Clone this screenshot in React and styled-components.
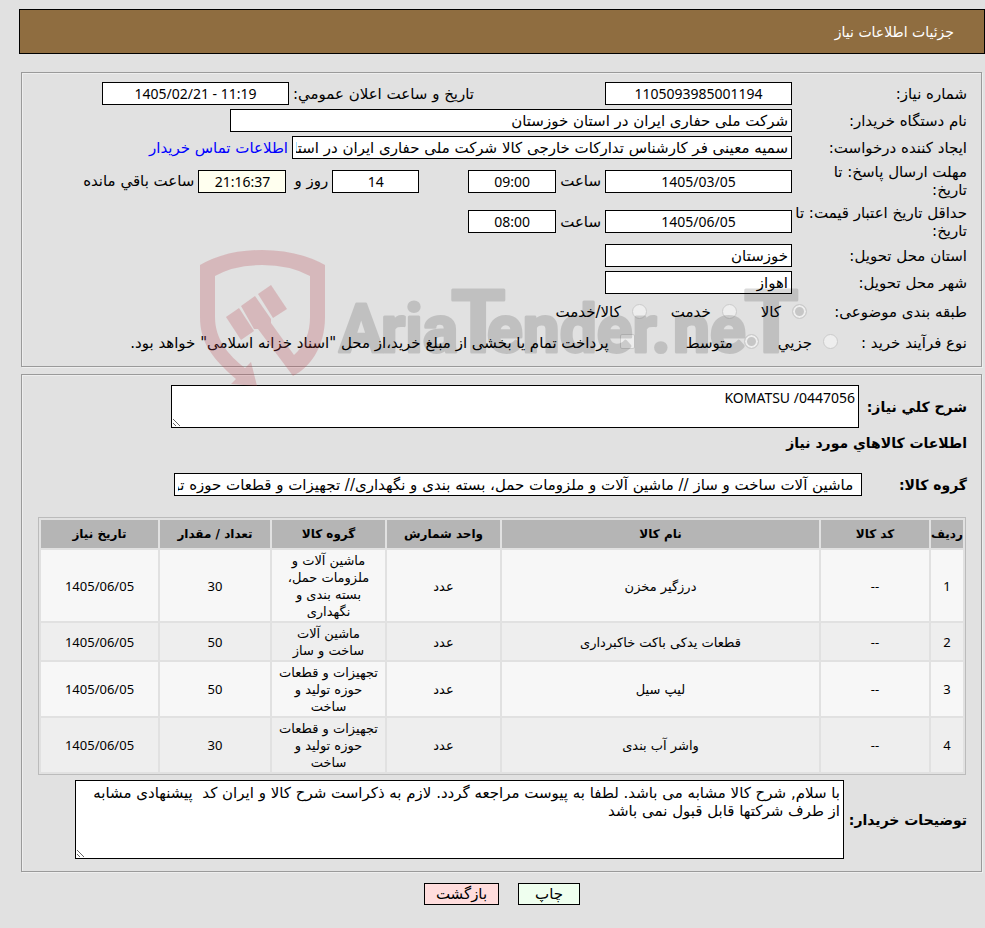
import React from 'react';
import styled, { createGlobalStyle } from 'styled-components';

const LATIN = '"Noto Sans", "DejaVu Sans", sans-serif';

const GlobalStyle = createGlobalStyle`
    * {
        box-sizing: border-box;
    }
    body {
        margin: 0;
        background-color: #e1e1e1;
        color: #000;
        font-family: "DejaVu Sans", sans-serif;
        font-size: 15px;
        line-height: 18px;
    }
    input, textarea, button {
        font: inherit;
        color: inherit;
    }
`

const Page = styled.main`
    position: relative;
    padding: 9px 0 22px 19px;
`

const Header = styled.h1`
    margin: 0 0 18px;
    padding: 13px 30px 12px;
    border: 1px solid #000;
    background-color: #8f6d40;
    color: #fff;
    font-size: 14px;
    font-weight: normal;
`

const Panel = styled.section`
    margin: 0 3px 7px 2px;
    padding: ${({ $pad }) => $pad};
    border: 1px solid #9a9a9a;
    box-shadow: inset 1px 1px #eee, 1px 1px #eee;
`

const Row = styled.div`
    display: flex;
    align-items: center;
    gap: 4px;
    min-height: ${({ $height }) => $height || 27}px;
`

const Label = styled.label`
    flex: none;
    width: ${({ $width }) => $width || 171}px;
    white-space: nowrap;
`

const Group = styled.span`
    flex: none;
    display: flex;
    align-items: center;
    gap: 4px;
    margin-left: ${({ $after }) => $after || 0}px;
`

const Field = styled.input`
    width: ${({ $width }) => $width || 187}px;
    min-width: 0;
    height: 23px;
    padding: 0 3px;
    border: 1px solid #000;
    border-radius: 0;
    background-color: ${({ $tint }) => $tint || '#fff'};
    text-align: right;
`

const NumberField = styled(Field)`
    font-family: ${LATIN};
    font-size: 14px;
    text-align: center;
`

const ContactLink = styled.a`
    color: #00f;
    text-decoration: none;
    white-space: nowrap;
`

const Option = styled.label`
    display: flex;
    align-items: center;
    gap: 11px;
    margin-left: ${({ $after }) => $after || 0}px;
    white-space: nowrap;
    input {
        appearance: none;
        flex: none;
        width: 15px;
        height: 15px;
        margin: 0 0 2px;
        border: 1px solid #cbcbcb;
        border-radius: 50%;
        background-color: #eee;
    }
    input[type="checkbox"] {
        border-radius: 2px;
    }
    input:checked {
        background-color: #c6c6c6;
        box-shadow: inset 0 0 0 2px #eee;
    }
`

const BoldLabel = styled.label`
    flex: none;
    width: ${({ $width }) => $width}px;
    font-size: 14px;
    font-weight: bold;
    white-space: nowrap;
`

const Title = styled.h2`
    margin: 5px 0 18px;
    font-size: 14px;
    line-height: 20px;
`

const Area = styled.textarea`
    flex: 0 1 ${({ $width }) => $width}px;
    height: ${({ $height }) => $height}px;
    padding: 3px;
    border: 1px solid #000;
    border-radius: 0;
    background-color: #fff;
`

const LatinArea = styled(Area)`
    font-family: ${LATIN};
    font-size: 14px;
`

const Table = styled.table`
    width: calc(100% - 3px);
    margin: 19px 1px 5px 2px;
    border: 1px solid #bbb;
    border-spacing: 2px;
    table-layout: fixed;
    text-align: center;
    font-size: 13px;
    line-height: 17px;
    th {
        height: 28px;
        padding: 0;
        background-color: #b5b5b5;
        font-size: 12px;
        white-space: nowrap;
    }
    td {
        padding: 2px 6px 1px;
        background-color: #f7f7f7;
    }
    tr:nth-child(even) td {
        background-color: #eee;
    }
`

const Col = styled.col`
    width: ${({ $width }) => $width || 'auto'};
`

const NumberCell = styled.td`
    font-family: ${LATIN};
`

const Actions = styled.div`
    display: flex;
    justify-content: center;
    gap: 19px;
    margin-top: 11px;
`

const Button = styled.button`
    width: ${({ $width }) => $width}px;
    height: 22px;
    padding: 0;
    border: 1px solid #000;
    background-color: ${({ $tint }) => $tint};
    cursor: pointer;
`

const Watermark = styled.div`
    position: absolute;
    left: 199px;
    top: 249px;
    pointer-events: none;
    svg {
        display: block;
    }
`

const ITEMS = [
    { name: 'درزگیر مخزن', group: 'ماشین آلات و ملزومات حمل، بسته بندی و نگهداری', count: 30 },
    { name: 'قطعات یدکی باکت خاکبرداری', group: 'ماشین آلات ساخت و ساز', count: 50 },
    { name: 'لیپ سیل', group: 'تجهیزات و قطعات حوزه تولید و ساخت', count: 50 },
    { name: 'واشر آب بندی', group: 'تجهیزات و قطعات حوزه تولید و ساخت', count: 30 },
]

const NOTE = 'با سلام, شرح کالا مشابه می باشد. لطفا به پیوست مراجعه گردد. لازم به ذکراست شرح کالا و ایران کد  پیشنهادی مشابه از طرف شرکتها قابل قبول نمی باشد';

const Logo = () => (
    <Watermark dir="ltr" aria-hidden="true">
        <svg width="604" height="140" viewBox="0 0 604 140">
            <g fill="#b8404a" fillOpacity="0.25">
                <path d="M1 16 Q27 1 63 1 Q99 1 126 16 V68 C126 99 110 119 94 127 L59 80 L55 80 L42 57 L56 47 L72 70 L72 74 L95 106 C106 96 111 84 111 68 V27 Q91 16 63 16 Q35 16 16 27 V68 C16 90 29 106 46 119 L52 113 L58 137 L32 135 L37 130 C14 110 1 94 1 68 Z" />
                <path d="M27 68 L40 59 L55 82 L42 91 Z" />
                <path d="M59 45 L72 36 L88 60 L74 69 Z" />
            </g>
            <text
                y="103"
                opacity="0.14"
                stroke="#000"
                strokeWidth="3"
                strokeLinejoin="round"
                fontFamily="Roboto, sans-serif"
                fontWeight="bold"
                fontSize="66"
            >
                <tspan x="140">A</tspan>
                <tspan x="182">ria</tspan>
                <tspan x="252" fontSize="88">T</tspan>
                <tspan x="288">ender.</tspan>
                <tspan x="474">ne</tspan>
                <tspan x="545" fontSize="88">T</tspan>
            </text>
        </svg>
    </Watermark>
)

const App = () => (
    <Page dir="rtl" lang="fa">
        <GlobalStyle />
        <Header>جزئیات اطلاعات نیاز</Header>

        <Panel $pad="7px 14px 9px">
            <Row>
                <Label htmlFor="number">شماره نیاز:</Label>
                <Group $after={127}>
                    <NumberField id="number" readOnly value="1105093985001194" />
                </Group>
                <label htmlFor="announced">تاریخ و ساعت اعلان عمومي:</label>
                <NumberField id="announced" dir="ltr" readOnly value="1405/02/21 - 11:19" />
            </Row>
            <Row>
                <Label htmlFor="buyer">نام دستگاه خریدار:</Label>
                <Field id="buyer" $width={562} readOnly value="شرکت ملی حفاری ایران در استان خوزستان" />
            </Row>
            <Row>
                <Label htmlFor="creator">ایجاد کننده درخواست:</Label>
                <Field
                    id="creator"
                    $width={500}
                    readOnly
                    value="سمیه معینی فر کارشناس تدارکات خارجی کالا شرکت ملی حفاری ایران در استان خوزستان"
                />
                <ContactLink href="#contact">اطلاعات تماس خریدار</ContactLink>
            </Row>
            <Row $height={40}>
                <Label htmlFor="deadline">مهلت ارسال پاسخ: تا<br />تاریخ:</Label>
                <NumberField id="deadline" readOnly value="1405/03/05" />
                <Group $after={45}>
                    <label htmlFor="deadlineTime">ساعت</label>
                    <NumberField id="deadlineTime" $width={88} readOnly value="09:00" />
                </Group>
                <NumberField id="days" $width={87} readOnly value="14" />
                <Group $after={4}>
                    <label htmlFor="days">روز و</label>
                </Group>
                <NumberField id="left" $width={88} $tint="#ffffef" readOnly value="21:16:37" />
                <label htmlFor="left">ساعت باقي مانده</label>
            </Row>
            <Row $height={41}>
                <Label htmlFor="validity">حداقل تاریخ اعتبار قیمت: تا<br />تاریخ:</Label>
                <NumberField id="validity" readOnly value="1405/06/05" />
                <label htmlFor="validityTime">ساعت</label>
                <NumberField id="validityTime" $width={88} readOnly value="08:00" />
            </Row>
            <Row>
                <Label htmlFor="province">استان محل تحویل:</Label>
                <Field id="province" readOnly value="خوزستان" />
            </Row>
            <Row>
                <Label htmlFor="city">شهر محل تحویل:</Label>
                <Field id="city" readOnly value="اهواز" />
            </Row>
            <Row $height={32}>
                <Label as="span" $width={156}>طبقه بندی موضوعی:</Label>
                <Group>
                    <Option $after={20}><input type="radio" name="kind" defaultChecked disabled />کالا</Option>
                    <Option $after={20}><input type="radio" name="kind" disabled />خدمت</Option>
                    <Option><input type="radio" name="kind" disabled />کالا/خدمت</Option>
                </Group>
            </Row>
            <Row $height={29}>
                <Label as="span" $width={125}>نوع فرآیند خرید :</Label>
                <Group>
                    <Option $after={15}><input type="radio" name="process" disabled />جزیي</Option>
                    <Option $after={47}><input type="radio" name="process" defaultChecked disabled />متوسط</Option>
                    <Option>
                        <input type="checkbox" disabled />
                        پرداخت تمام یا بخشی از مبلغ خرید،از محل "اسناد خزانه اسلامی" خواهد بود.
                    </Option>
                </Group>
            </Row>
        </Panel>

        <Panel $pad="10px 14px 12px">
            <Row>
                <BoldLabel htmlFor="summary" $width={104}>شرح کلي نیاز:</BoldLabel>
                <LatinArea id="summary" $width={688} $height={43} readOnly value="KOMATSU /0447056" />
            </Row>
            <Title>اطلاعات کالاهاي مورد نیاز</Title>
            <Row>
                <BoldLabel htmlFor="group" $width={101}>گروه کالا:</BoldLabel>
                <Field
                    id="group"
                    $width={688}
                    readOnly
                    value=" ماشین آلات ساخت و ساز // ماشین آلات و ملزومات حمل، بسته بندی و نگهداری// تجهیزات و قطعات حوزه تولید و ساخت"
                />
            </Row>
            <Table>
                <colgroup>
                    <Col $width="32px" />
                    <Col $width="108px" />
                    <Col />
                    <Col $width="113px" />
                    <Col $width="113px" />
                    <Col $width="110px" />
                    <Col $width="117px" />
                </colgroup>
                <thead>
                    <tr>
                        <th>ردیف</th>
                        <th>کد کالا</th>
                        <th>نام کالا</th>
                        <th>واحد شمارش</th>
                        <th>گروه کالا</th>
                        <th>تعداد / مقدار</th>
                        <th>تاریخ نیاز</th>
                    </tr>
                </thead>
                <tbody>
                    {ITEMS.map(({ name, group, count }, i) => (
                        <tr key={name}>
                            <NumberCell>{i + 1}</NumberCell>
                            <NumberCell>--</NumberCell>
                            <td>{name}</td>
                            <td>عدد</td>
                            <td>{group}</td>
                            <NumberCell>{count}</NumberCell>
                            <NumberCell>1405/06/05</NumberCell>
                        </tr>
                    ))}
                </tbody>
            </Table>
            <Row>
                <BoldLabel htmlFor="note" $width={119}>توضیحات خریدار:</BoldLabel>
                <Area id="note" $width={769} $height={79} readOnly value={NOTE} />
            </Row>
        </Panel>

        <Actions>
            <Button type="button" $width={62} $tint="#efffef">چاپ</Button>
            <Button type="button" $width={75} $tint="#ffdddd">بازگشت</Button>
        </Actions>

        <Logo />
    </Page>
)

export default App;
